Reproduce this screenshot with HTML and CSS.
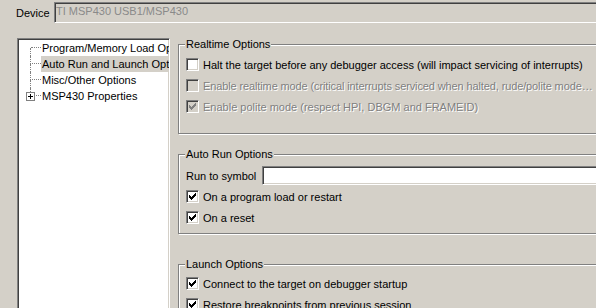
FILE: index.html
```html
<!DOCTYPE html>
<html lang="en">

<head>
    <meta charset="UTF-8">
    <title>Debug Properties</title>
    <link rel="stylesheet" href="styles.css">
</head>

<body>

    <div class="device-row">
        <span class="device-label">Device</span>
        <div class="field disabled">TI MSP430 USB1/MSP430</div>
    </div>

    <div class="main">
        <!-- Category tree -->
        <ul class="tree">
            <li class="tree-item first"><span class="branch"></span><span class="tree-text">Program/Memory Load Options</span></li>
            <li class="tree-item selected"><span class="branch"></span><span class="tree-text">Auto Run and Launch Options</span></li>
            <li class="tree-item"><span class="branch"></span><span class="tree-text">Misc/Other Options</span></li>
            <li class="tree-item last"><span class="branch"><span class="expander"></span></span><span class="tree-text">MSP430 Properties</span></li>
        </ul>

        <div class="options">
            <fieldset class="group realtime">
                <legend>Realtime Options</legend>
                <label class="check"><span class="box"></span><span>Halt the target before any debugger access (will impact servicing of interrupts)</span></label>
                <label class="check disabled"><span class="box"></span><span class="ellipsis">Enable realtime mode (critical interrupts serviced when halted, rude/polite mode enabled)</span></label>
                <label class="check disabled"><span class="box checked">
                    <svg width="7" height="7" viewBox="0 0 7 7" shape-rendering="crispEdges"><rect x="0" y="2" width="1" height="3"/><rect x="1" y="3" width="1" height="3"/><rect x="2" y="4" width="1" height="3"/><rect x="3" y="3" width="1" height="3"/><rect x="4" y="2" width="1" height="3"/><rect x="5" y="1" width="1" height="3"/><rect x="6" y="0" width="1" height="3"/></svg>
                </span><span>Enable polite mode (respect HPI, DBGM and FRAMEID)</span></label>
            </fieldset>

            <fieldset class="group autorun">
                <legend>Auto Run Options</legend>
                <div class="symbol-row">
                    <span class="symbol-label">Run to symbol</span>
                    <div class="field"></div>
                </div>
                <label class="check"><span class="box checked">
                    <svg width="7" height="7" viewBox="0 0 7 7" shape-rendering="crispEdges"><rect x="0" y="2" width="1" height="3"/><rect x="1" y="3" width="1" height="3"/><rect x="2" y="4" width="1" height="3"/><rect x="3" y="3" width="1" height="3"/><rect x="4" y="2" width="1" height="3"/><rect x="5" y="1" width="1" height="3"/><rect x="6" y="0" width="1" height="3"/></svg>
                </span><span>On a program load or restart</span></label>
                <label class="check"><span class="box checked">
                    <svg width="7" height="7" viewBox="0 0 7 7" shape-rendering="crispEdges"><rect x="0" y="2" width="1" height="3"/><rect x="1" y="3" width="1" height="3"/><rect x="2" y="4" width="1" height="3"/><rect x="3" y="3" width="1" height="3"/><rect x="4" y="2" width="1" height="3"/><rect x="5" y="1" width="1" height="3"/><rect x="6" y="0" width="1" height="3"/></svg>
                </span><span>On a reset</span></label>
            </fieldset>

            <fieldset class="group launch">
                <legend>Launch Options</legend>
                <label class="check"><span class="box checked">
                    <svg width="7" height="7" viewBox="0 0 7 7" shape-rendering="crispEdges"><rect x="0" y="2" width="1" height="3"/><rect x="1" y="3" width="1" height="3"/><rect x="2" y="4" width="1" height="3"/><rect x="3" y="3" width="1" height="3"/><rect x="4" y="2" width="1" height="3"/><rect x="5" y="1" width="1" height="3"/><rect x="6" y="0" width="1" height="3"/></svg>
                </span><span>Connect to the target on debugger startup</span></label>
                <label class="check"><span class="box checked">
                    <svg width="7" height="7" viewBox="0 0 7 7" shape-rendering="crispEdges"><rect x="0" y="2" width="1" height="3"/><rect x="1" y="3" width="1" height="3"/><rect x="2" y="4" width="1" height="3"/><rect x="3" y="3" width="1" height="3"/><rect x="4" y="2" width="1" height="3"/><rect x="5" y="1" width="1" height="3"/><rect x="6" y="0" width="1" height="3"/></svg>
                </span><span>Restore breakpoints from previous session</span></label>
            </fieldset>
        </div>
    </div>

</body>

</html>
```

FILE: styles.css
```css
/* Classic dialog look */
body {
    margin: 0;
    width: 596px;
    height: 308px;
    overflow: hidden;
    background-color: #d4d0c8;
    font-family: "Liberation Sans", Arial, sans-serif;
    font-size: 11px;
    color: #000;
}

/* Sunken edit field */
.field {
    flex: 1;
    box-sizing: border-box;
    height: 21px;
    border: 1px solid;
    border-color: #808080 #fff #fff #808080;
    box-shadow: inset 1px 1px #404040, inset -1px -1px #d4d0c8;
    background-color: #fff;
    padding: 0 1px;
    line-height: 17px;
    white-space: nowrap;
}

.field.disabled {
    background-color: #d4d0c8;
    color: #8a8a8a;
}

.device-row {
    display: flex;
    align-items: center;
    padding: 2px 0 0 16px;
    margin-right: -20px;
}

.device-label {
    width: 38px;
}

.main {
    display: flex;
    align-items: flex-start;
    margin: 15px 0 0 17px;
}

/* Tree */
.tree {
    width: 153px;
    height: 290px;
    box-sizing: border-box;
    margin: 0;
    padding: 1px 0 0 0;
    list-style: none;
    overflow: hidden;
    background-color: #fff;
    border: 1px solid;
    border-color: #808080 #fff #fff #808080;
    box-shadow: inset 1px 1px #404040, inset -1px -1px #d4d0c8;
}

.tree-item {
    display: flex;
    height: 16px;
    padding-left: 1px;
}

.branch {
    position: relative;
    display: grid;
    grid-template-rows: 8px 8px;
    width: 11px;
    margin-left: 11px;
    flex-shrink: 0;
}

.branch::before {
    content: '';
    border-left: 1px dotted #808080;
    border-bottom: 1px dotted #808080;
}

.branch::after {
    content: '';
    border-left: 1px dotted #808080;
}

.first .branch::before {
    border-left: none;
    margin-left: 1px;
}

.last .branch::after {
    border-left: none;
}

.expander {
    position: absolute;
    left: -4px;
    top: 4px;
    width: 9px;
    height: 9px;
    box-sizing: border-box;
    border: 1px solid #808080;
    background:
        linear-gradient(#000, #000) center / 5px 1px no-repeat,
        linear-gradient(#000, #000) center / 1px 5px no-repeat,
        #fff;
}

.tree-text {
    flex: 1;
    padding-left: 1px;
    line-height: 16px;
    white-space: nowrap;
}

.selected .tree-text {
    background-color: #d4d0c8;
}

/* Option groups */
.options {
    flex: 1;
    margin: 0 -30px 0 8px;
}

.group {
    margin: 0;
    min-width: 0;
    padding: 3px 0 0 7px;
    border: 1px solid #808080;
    box-shadow: inset 1px 1px #fff, 1px 1px #fff;
}

.group legend {
    padding: 0 1px;
    margin-left: -1px;
    line-height: 13px;
    background-color: #d4d0c8;
}

.realtime {
    padding-bottom: 16px;
}

.autorun {
    margin-top: 14px;
    padding-top: 5px;
    padding-bottom: 5px;
}

.launch {
    margin-top: 24px;
    padding-top: 2px;
}

.check {
    display: flex;
    align-items: center;
    height: 21px;
}

.box {
    display: flex;
    align-items: center;
    justify-content: center;
    width: 13px;
    height: 13px;
    box-sizing: border-box;
    margin-right: 4px;
    flex-shrink: 0;
    border: 1px solid;
    border-color: #808080 #fff #fff #808080;
    box-shadow: inset 1px 1px #404040, inset -1px -1px #d4d0c8;
    background-color: #fff;
}

.check.disabled {
    color: #808080;
    text-shadow: 1px 1px 0 #fff;
}

.check.disabled .box {
    background-color: #d4d0c8;
    fill: #808080;
}

.ellipsis {
    max-width: 392px;
    overflow: hidden;
    white-space: nowrap;
    text-overflow: ellipsis;
    letter-spacing: -0.12px;
}

.symbol-row {
    display: flex;
    align-items: center;
    margin-bottom: 1px;
}

.symbol-label {
    width: 76px;
}

.symbol-row .field {
    height: 19px;
}
```
